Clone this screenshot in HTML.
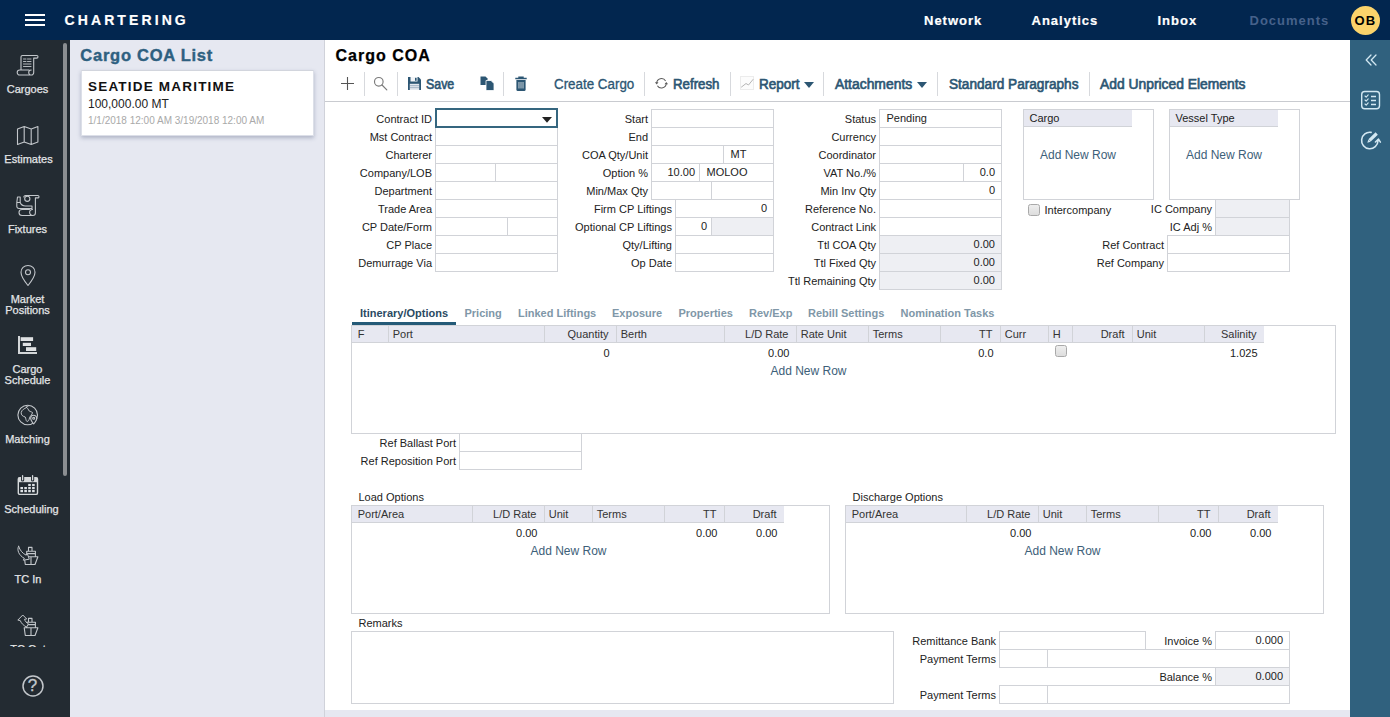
<!DOCTYPE html>
<html lang="en"><head><meta charset="utf-8"><title>Cargo COA - Chartering</title>
<style>
html,body{margin:0;padding:0}
body{width:1390px;height:717px;overflow:hidden;position:relative;background:#fff;font-family:"Liberation Sans",sans-serif;font-size:11px;color:#222}
div,svg{position:absolute;box-sizing:border-box}
.t{white-space:nowrap}
.in{border:1px solid #d1d3d8;background:#fff}
.ro{background:#eeeff3}
.hd{background:#e7e8f1;border-bottom:1px solid #d1d3d8}
.sep{width:1px;background:#d1d3d8}
.cb{width:12px;height:12px;border:1px solid #a9a9a9;border-radius:2.500px;background:linear-gradient(#eeeeee,#dddddd)}
</style></head><body>

<div style="left:0px;top:0px;width:1390px;height:40px;background:#02264f"></div>
<div style="left:0px;top:40px;width:70px;height:677px;background:#232b32"></div>
<div style="left:70px;top:40px;width:255px;height:677px;background:#e6e8f1"></div>
<div style="left:324px;top:40px;width:1px;height:677px;background:#d0d2da"></div>
<div style="left:325px;top:40px;width:1025px;height:670px;background:#fff"></div>
<div style="left:325px;top:710px;width:1025px;height:7px;background:#e6e8f1"></div>
<div style="left:1350px;top:40px;width:40px;height:677px;background:#30617e"></div>
<div style="left:25px;top:14px;width:20px;height:2px;background:#fff"></div>
<div style="left:25px;top:19px;width:20px;height:2px;background:#fff"></div>
<div style="left:25px;top:24px;width:20px;height:2px;background:#fff"></div>
<div class="t" style="top:11.0px;font-size:14px;line-height:18px;color:#fff;font-weight:bold;letter-spacing:3.1px;left:64.5px;-webkit-text-stroke:.2px #fff;">CHARTERING</div>
<div class="t" style="top:12.0px;font-size:13px;line-height:17px;color:#fff;font-weight:bold;letter-spacing:1px;left:924px;-webkit-text-stroke:.2px #fff;">Network</div>
<div class="t" style="top:12.0px;font-size:13px;line-height:17px;color:#fff;font-weight:bold;letter-spacing:1px;left:1031.5px;-webkit-text-stroke:.2px #fff;">Analytics</div>
<div class="t" style="top:12.0px;font-size:13px;line-height:17px;color:#fff;font-weight:bold;letter-spacing:1px;left:1157.5px;-webkit-text-stroke:.2px #fff;">Inbox</div>
<div class="t" style="top:12.0px;font-size:13px;line-height:17px;color:#46618a;font-weight:bold;letter-spacing:1px;left:1249.5px;">Documents</div>
<div style="left:1350.5px;top:6px;width:29px;height:29px;background:#fbd36b;border-radius:50%"></div>
<div class="t" style="top:12.0px;font-size:13px;line-height:17px;color:#000;font-weight:bold;letter-spacing:1.2px;left:1354.5px;">OB</div>
<div style="left:63px;top:43px;width:4px;height:433px;background:#8b8e91;border-radius:2px"></div>
<div style="left:0;top:40px;width:62px;height:607px;overflow:hidden">
<svg style="left:16px;top:14px" width="24" height="23" viewBox="0 0 24 23" fill="none" stroke="#c3c7cb" stroke-width="1.1" stroke-linecap="round" stroke-linejoin="round" ><path d="M6.500 1.500H20.700a1.300 1.300 0 0 1 0 2.600H17.700V18.500a2.500 2.500 0 0 1-2.500 2.500H3.700a2.500 2.500 0 0 1 0-5H13M5 16V3a1.500 1.500 0 0 1 1.500-1.500M15.200 21a2.500 2.500 0 0 1 0-5"/><path d="M7.500 5h2.500M11.500 5h3.500M7.500 7.500h2.500M11.500 7.500h3.500M7.500 10h7.500M7.500 12.500h7.500" stroke-width=".9"/></svg>
<div class="t" style="top:41.5px;font-size:11px;line-height:15px;color:#e3e5e7;left:-122.5px;width:300px;text-align:center;-webkit-text-stroke:.25px #e3e5e7;">Cargoes</div>
<svg style="left:16px;top:85px" width="24" height="22" viewBox="0 0 24 22" fill="none" stroke="#c3c7cb" stroke-width="1.1" stroke-linecap="round" stroke-linejoin="round" ><path d="M1.500 4l6.700-2.500v15.500l-6.700 2.500zM8.200 1.500l7 2.500v15.500l-7-2.500M15.200 4l6.700-2.500v15.500l-6.700 2.500"/></svg>
<div class="t" style="top:111.5px;font-size:11px;line-height:15px;color:#e3e5e7;left:-121.5px;width:300px;text-align:center;-webkit-text-stroke:.25px #e3e5e7;">Estimates</div>
<svg style="left:16px;top:153px" width="24" height="24" viewBox="0 0 24 24" fill="none" stroke="#c3c7cb" stroke-width="1.1" stroke-linecap="round" stroke-linejoin="round" ><path d="M9.500 2.500H21.800a1.200 1.200 0 0 1 0 2.400H19.400V20a2.500 2.500 0 0 1-2.500 2.500H6a3 3 0 0 1 0-6h7.500M16.800 22.500a3 3 0 0 1-.3-6M9.500 2.500a2 2 0 0 0-1.700 1.500"/><circle cx="11.300" cy="5.800" r="2.600"/><path d="M.8 9.500h3.400v-5.500H1.500zM4.200 9.500c1 2.500 3 3.500 5.300 3.500h6.500v2.500H3a2.200 2.200 0 0 1-2.200-2.200V9.500"/></svg>
<div class="t" style="top:181.5px;font-size:11px;line-height:15px;color:#e3e5e7;left:-122.5px;width:300px;text-align:center;-webkit-text-stroke:.25px #e3e5e7;">Fixtures</div>
<svg style="left:18px;top:224px" width="20" height="24" viewBox="0 0 20 24" fill="none" stroke="#c3c7cb" stroke-width="1.1" stroke-linecap="round" stroke-linejoin="round" ><path d="M10 1.500c-4 0-7 3-7 6.800 0 4.700 7 13.200 7 13.200s7-8.500 7-13.200c0-3.800-3-6.800-7-6.800z"/><circle cx="10" cy="8.300" r="2.500"/></svg>
<div class="t" style="top:251.5px;font-size:11px;line-height:15px;color:#e3e5e7;left:-122.5px;width:300px;text-align:center;-webkit-text-stroke:.25px #e3e5e7;">Market</div>
<div class="t" style="top:262.5px;font-size:11px;line-height:15px;color:#e3e5e7;left:-122.5px;width:300px;text-align:center;-webkit-text-stroke:.25px #e3e5e7;">Positions</div>
<svg style="left:17px;top:296px" width="22" height="20" viewBox="0 0 22 20"><path d="M2 0V17H20" fill="none" stroke="#d3d6d8" stroke-width="2"/><rect x="3.600" y="1.200" width="12.500" height="3.800" fill="#dfe1e3"/><rect x="5.800" y="6.800" width="8.200" height="3.200" fill="#dfe1e3"/><rect x="9" y="11.200" width="10.200" height="3.800" fill="#dfe1e3"/></svg>
<div class="t" style="top:321.5px;font-size:11px;line-height:15px;color:#e3e5e7;left:-122.5px;width:300px;text-align:center;-webkit-text-stroke:.25px #e3e5e7;">Cargo</div>
<div class="t" style="top:332.5px;font-size:11px;line-height:15px;color:#e3e5e7;left:-122.5px;width:300px;text-align:center;-webkit-text-stroke:.25px #e3e5e7;">Schedule</div>
<svg style="left:16px;top:363px" width="24" height="24" viewBox="0 0 24 24" fill="none" stroke="#c3c7cb" stroke-width="1.1" stroke-linecap="round" stroke-linejoin="round" ><circle cx="11.700" cy="12" r="9.800"/><path d="M10.500 4.500C8 6 6 6.500 5.200 9.500 5 12 6.500 13.200 9.200 14c.8 1.500.6 3.500 1.600 4.300 1.700.5 2.200-1.300 2.700-3.300s3-3.500 3-5.500c-1.500-1-3.500-1-4-2.500s-1-2-2-2.500zM10 2.800c.5 1 2 1 2.500 .2" stroke-width="1"/><path d="M17.700 12.300c-1.700 0-3 1.300-3 2.900 0 2 3 5.800 3 5.800s3-3.800 3-5.800c0-1.600-1.300-2.900-3-2.900z" fill="#232b32"/><circle cx="17.700" cy="15.200" r="1"/></svg>
<div class="t" style="top:391.5px;font-size:11px;line-height:15px;color:#e3e5e7;left:-122.5px;width:300px;text-align:center;-webkit-text-stroke:.25px #e3e5e7;">Matching</div>
<svg style="left:16px;top:433px" width="24" height="24" viewBox="0 0 24 24"><rect x="2.300" y="4.600" width="19.200" height="16.800" rx="1.500" fill="none" stroke="#d6d9db" stroke-width="1.400"/><rect x="2.300" y="4.600" width="19.200" height="4.600" fill="#d6d9db"/><path d="M6.600 2.400v4.600M16.600 2.400v4.600" stroke="#232b32" stroke-width="3.200" stroke-linecap="round"/><path d="M6.600 2.600v4.200M16.600 2.600v4.200" stroke="#d6d9db" stroke-width="1.300" stroke-linecap="round"/><g fill="#dfe3e6"><rect x="12.2" y="10.9" width="2.600" height="2.200"/><rect x="16.1" y="10.9" width="2.600" height="2.200"/><rect x="4.4" y="14.0" width="2.600" height="2.200"/><rect x="8.3" y="14.0" width="2.600" height="2.200"/><rect x="12.2" y="14.0" width="2.600" height="2.200"/><rect x="16.1" y="14.0" width="2.600" height="2.200"/><rect x="4.4" y="17.0" width="2.600" height="2.200"/><rect x="8.3" y="17.0" width="2.600" height="2.200"/><rect x="12.2" y="17.0" width="2.600" height="2.200"/><rect x="16.1" y="17.0" width="2.600" height="2.200"/></g></svg>
<div class="t" style="top:461.5px;font-size:11px;line-height:15px;color:#e3e5e7;left:-118.5px;width:300px;text-align:center;-webkit-text-stroke:.25px #e3e5e7;">Scheduling</div>
<svg style="left:15px;top:503px" width="26" height="24" viewBox="0 0 26 24" fill="none" stroke="#c3c7cb" stroke-width="1.1" stroke-linecap="round" stroke-linejoin="round" ><path d="M9.200 13.700H22.900L20 21.500H10.300zM16 13.700v7.800M11.700 13.700V8.200h8.700v5.500M11.700 10.600h8.700M13.500 8.200V4.400h3.500v3.800"/><path d="M3.600 3.300C1.500 7 4 12.500 9.300 15.300L8.300 17.200 14.300 16.200 12.200 10.300 11.200 12.200C7.500 10.300 5 7.500 3.600 3.300z" fill="#232b32" stroke-width="1"/></svg>
<div class="t" style="top:531.5px;font-size:11px;line-height:15px;color:#e3e5e7;left:-122px;width:300px;text-align:center;-webkit-text-stroke:.25px #e3e5e7;">TC In</div>
<svg style="left:15px;top:574px" width="26" height="24" viewBox="0 0 26 24" fill="none" stroke="#c3c7cb" stroke-width="1.1" stroke-linecap="round" stroke-linejoin="round" ><path d="M9.200 13.700H22.900L20 21.500H10.300zM16 13.700v7.800M11.700 13.700V8.200h8.700v5.500M11.700 10.600h8.700M13.500 8.200V4.400h3.500v3.800"/><path d="M7.500 1.300L2.800 6.100 5.200 6.500C6.500 9.500 8.500 11.500 11.500 13L13.500 9.800C11.500 8.800 10.200 7.300 9.500 5.300L11.300 5z" fill="#232b32" stroke-width="1"/></svg>
<div class="t" style="top:601.5px;font-size:11px;line-height:15px;color:#e3e5e7;left:-122px;width:300px;text-align:center;-webkit-text-stroke:.25px #e3e5e7;">TC Out</div>
</div>
<svg style="left:20.5px;top:673.5px" width="24" height="24" viewBox="0 0 24 24" fill="none" stroke="#c3c7cb" stroke-width="1.5" stroke-linecap="round" stroke-linejoin="round" ><circle cx="12" cy="12" r="10"/></svg>
<div class="t" style="top:675.0px;font-size:17px;line-height:21px;color:#c3c7cb;left:-117.5px;width:300px;text-align:center;-webkit-text-stroke:.3px #c3c7cb;">?</div>
<div class="t" style="top:45.0px;font-size:16.5px;line-height:20.5px;color:#2e6080;font-weight:bold;letter-spacing:0.75px;left:80.3px;-webkit-text-stroke:.4px #2e6080;">Cargo COA List</div>
<div style="left:80.5px;top:70px;width:233px;height:66px;background:#fff;border:1px solid #dcdfe8;border-top-color:#d2d5dd;box-shadow:0 1.5px 4px rgba(60,70,110,.32)"></div>
<div class="t" style="top:77.5px;font-size:13.5px;line-height:17.5px;color:#111;font-weight:bold;letter-spacing:1.2px;left:88px;">SEATIDE MARITIME</div>
<div class="t" style="top:96.0px;font-size:12px;line-height:16px;color:#222;left:88px;">100,000.00 MT</div>
<div class="t" style="top:113.5px;font-size:10px;line-height:14px;color:#a9a9a9;left:88px;">1/1/2018 12:00 AM 3/19/2018 12:00 AM</div>
<div class="t" style="top:45.5px;font-size:16px;line-height:20px;color:#000;font-weight:bold;letter-spacing:1px;left:335.5px;-webkit-text-stroke:.25px #000;">Cargo COA</div>
<div style="left:325px;top:101px;width:1025px;height:1px;background:#c9cbd0"></div>
<div style="left:364px;top:72px;width:1px;height:24px;background:#d7d9dd"></div>
<div style="left:397px;top:72px;width:1px;height:24px;background:#d7d9dd"></div>
<div style="left:503px;top:72px;width:1px;height:24px;background:#d7d9dd"></div>
<div style="left:644px;top:72px;width:1px;height:24px;background:#d7d9dd"></div>
<div style="left:730px;top:72px;width:1px;height:24px;background:#d7d9dd"></div>
<div style="left:823px;top:72px;width:1px;height:24px;background:#d7d9dd"></div>
<div style="left:937px;top:72px;width:1px;height:24px;background:#d7d9dd"></div>
<div style="left:1089px;top:72px;width:1px;height:24px;background:#d7d9dd"></div>
<div class="t" style="top:75.0px;font-size:14px;line-height:18px;color:#2c5673;left:426.3px;-webkit-text-stroke:0.65px #2c5673;transform:scaleX(0.8835);transform-origin:0 0;">Save</div>
<div class="t" style="top:75.0px;font-size:14px;line-height:18px;color:#2c5673;left:553.7px;-webkit-text-stroke:0.3px #2c5673;transform:scaleX(0.9554);transform-origin:0 0;">Create Cargo</div>
<div class="t" style="top:75.0px;font-size:14px;line-height:18px;color:#2c5673;left:672.8px;-webkit-text-stroke:0.65px #2c5673;transform:scaleX(0.9484);transform-origin:0 0;">Refresh</div>
<div class="t" style="top:75.0px;font-size:14px;line-height:18px;color:#2c5673;left:759.3px;-webkit-text-stroke:0.65px #2c5673;transform:scaleX(0.9636);transform-origin:0 0;">Report</div>
<div class="t" style="top:75.0px;font-size:14px;line-height:18px;color:#2c5673;left:834.6px;-webkit-text-stroke:0.65px #2c5673;transform:scaleX(0.9919);transform-origin:0 0;">Attachments</div>
<div class="t" style="top:75.0px;font-size:14px;line-height:18px;color:#2c5673;left:948.8px;-webkit-text-stroke:0.65px #2c5673;transform:scaleX(0.9730);transform-origin:0 0;">Standard Paragraphs</div>
<div class="t" style="top:75.0px;font-size:14px;line-height:18px;color:#2c5673;left:1100.1px;-webkit-text-stroke:0.65px #2c5673;transform:scaleX(0.9893);transform-origin:0 0;">Add Unpriced Elements</div>
<svg style="left:341px;top:77px" width="13" height="13" viewBox="0 0 13 13" fill="none" stroke="#555" stroke-width="1.1" stroke-linecap="round" stroke-linejoin="round" stroke-linecap="butt"><path d="M6.500 0v13M0 6.500h13"/></svg>
<svg style="left:373px;top:76px" width="15" height="15" viewBox="0 0 15 15" fill="none" stroke="#7a7a7a" stroke-width="1.15" stroke-linecap="round" stroke-linejoin="round" ><circle cx="5.800" cy="5.800" r="4.300"/><path d="M9 9l4.800 4.800"/></svg>
<svg style="left:408px;top:77px" width="13" height="13" viewBox="0 0 13 13"><path d="M0 0h10.500L13 2.500V13H0z" fill="#2c5673"/><rect x="2.500" y="0" width="7" height="4.500" fill="#f3f5f8"/><rect x="7" y=".8" width="1.600" height="3" fill="#2c5673"/><rect x="1.800" y="6.800" width="9.400" height="6.200" fill="#e4e9ef"/><path d="M2 8.700h9M2 10.700h9" stroke="#8ba0b5" stroke-width=".8"/></svg>
<svg style="left:480px;top:76px" width="15" height="15" viewBox="0 0 15 15"><path d="M.5.5h5l2 2V9h-7z" fill="#2c5673"/><path d="M6 4.500h5l3 3V14.500H6z" fill="#2c5673" stroke="#fff" stroke-width=".8"/></svg>
<svg style="left:514.500px;top:76px" width="12" height="15" viewBox="0 0 13 15" preserveAspectRatio="none"><path d="M1.500 4h10v9.500a1.500 1.500 0 0 1-1.500 1.500H3a1.500 1.500 0 0 1-1.500-1.500z" fill="#2c5673"/><path d="M.3 2.600h12.400M4.300 2.200V1.200h4.400V2.200" stroke="#2c5673" stroke-width="1.500" fill="none"/><path d="M4.300 6v6.500M6.500 6v6.500M8.700 6v6.500" stroke="#fff" stroke-width=".8"/></svg>
<svg style="left:654px;top:77px" width="15" height="13" viewBox="0 0 15 13" fill="none" stroke="#5c5c5c" stroke-width="1.050"><path d="M2.700 6.300A4.800 4.800 0 0 1 11.600 3.900M12.300 6.300A4.800 4.800 0 0 1 3.400 8.700"/><path d="M.9 5.300L2.700 7.500 4.500 5.300zM10.500 7.300L12.300 5.100 14.100 7.300z" fill="#5c5c5c" stroke="none"/></svg>
<div style="left:740px;top:76px;width:14px;height:14px;border:1px solid #ececec;background:#fcfcfc"></div>
<svg style="left:740px;top:76px" width="14" height="14" viewBox="0 0 14 14" fill="none" stroke="#b5b5b5" stroke-width="1" stroke-linecap="round" stroke-linejoin="round" ><path d="M1.500 11l4.500-3.500 2.500 1.500 4.500-5.500"/></svg>
<svg style="left:804px;top:82px" width="10" height="6" viewBox="0 0 10 6"><path d="M0 0h10L5 6z" fill="#2c5673"/></svg>
<svg style="left:917px;top:82px" width="10" height="6" viewBox="0 0 10 6"><path d="M0 0h10L5 6z" fill="#2c5673"/></svg>
<div class="t" style="top:111.5px;font-size:11px;line-height:15px;color:#222;right:958px;">Contract ID</div>
<div class="t" style="top:129.5px;font-size:11px;line-height:15px;color:#222;right:958px;">Mst Contract</div>
<div class="t" style="top:147.5px;font-size:11px;line-height:15px;color:#222;right:958px;">Charterer</div>
<div class="t" style="top:165.5px;font-size:11px;line-height:15px;color:#222;right:958px;">Company/LOB</div>
<div class="t" style="top:183.5px;font-size:11px;line-height:15px;color:#222;right:958px;">Department</div>
<div class="t" style="top:201.5px;font-size:11px;line-height:15px;color:#222;right:958px;">Trade Area</div>
<div class="t" style="top:219.5px;font-size:11px;line-height:15px;color:#222;right:958px;">CP Date/Form</div>
<div class="t" style="top:237.5px;font-size:11px;line-height:15px;color:#222;right:958px;">CP Place</div>
<div class="t" style="top:255.5px;font-size:11px;line-height:15px;color:#222;right:958px;">Demurrage Via</div>
<div class="in" style="left:435px;top:109px;width:123px;height:19px;"></div>
<div class="in" style="left:435px;top:127px;width:123px;height:19px;"></div>
<div class="in" style="left:435px;top:145px;width:123px;height:19px;"></div>
<div class="in" style="left:435px;top:163px;width:61px;height:19px;"></div>
<div class="in" style="left:495px;top:163px;width:63px;height:19px;"></div>
<div class="in" style="left:435px;top:181px;width:123px;height:19px;"></div>
<div class="in" style="left:435px;top:199px;width:123px;height:19px;"></div>
<div class="in" style="left:435px;top:217px;width:73px;height:19px;"></div>
<div class="in" style="left:507px;top:217px;width:51px;height:19px;"></div>
<div class="in" style="left:435px;top:235px;width:123px;height:19px;"></div>
<div class="in" style="left:435px;top:253px;width:123px;height:19px;"></div>
<div style="left:435px;top:108px;width:123px;height:20px;border:2px solid #35667f;background:#fff"></div>
<svg style="left:542px;top:117px" width="10" height="6" viewBox="0 0 10 6"><path d="M0 0h10L5 5.700z" fill="#222"/></svg>
<div class="t" style="top:111.5px;font-size:11px;line-height:15px;color:#222;right:742px;">Start</div>
<div class="t" style="top:129.5px;font-size:11px;line-height:15px;color:#222;right:742px;">End</div>
<div class="t" style="top:147.5px;font-size:11px;line-height:15px;color:#222;right:742px;">COA Qty/Unit</div>
<div class="t" style="top:165.5px;font-size:11px;line-height:15px;color:#222;right:742px;">Option %</div>
<div class="t" style="top:183.5px;font-size:11px;line-height:15px;color:#222;right:742px;">Min/Max Qty</div>
<div class="t" style="top:201.5px;font-size:11px;line-height:15px;color:#222;right:718px;">Firm CP Liftings</div>
<div class="t" style="top:219.5px;font-size:11px;line-height:15px;color:#222;right:718px;">Optional CP Liftings</div>
<div class="t" style="top:237.5px;font-size:11px;line-height:15px;color:#222;right:718px;">Qty/Lifting</div>
<div class="t" style="top:255.5px;font-size:11px;line-height:15px;color:#222;right:718px;">Op Date</div>
<div class="in" style="left:651px;top:109px;width:123px;height:19px;"></div>
<div class="in" style="left:651px;top:127px;width:123px;height:19px;"></div>
<div class="in" style="left:651px;top:145px;width:73px;height:19px;"></div>
<div class="in" style="left:723px;top:145px;width:51px;height:19px;"></div>
<div class="t" style="top:146.5px;font-size:11px;line-height:15px;color:#222;left:730.5px;">MT</div>
<div class="in" style="left:651px;top:163px;width:49px;height:19px;"></div>
<div class="t" style="top:164.5px;font-size:11px;line-height:15px;color:#222;right:695px;">10.00</div>
<div class="in" style="left:699px;top:163px;width:75px;height:19px;"></div>
<div class="t" style="top:164.5px;font-size:11px;line-height:15px;color:#222;left:706.5px;">MOLOO</div>
<div class="in" style="left:651px;top:181px;width:61px;height:19px;"></div>
<div class="in" style="left:711px;top:181px;width:63px;height:19px;"></div>
<div class="in" style="left:675px;top:199px;width:99px;height:19px;"></div>
<div class="t" style="top:200.5px;font-size:11px;line-height:15px;color:#222;right:623px;">0</div>
<div class="in" style="left:675px;top:217px;width:37px;height:19px;"></div>
<div class="t" style="top:218.5px;font-size:11px;line-height:15px;color:#222;right:683px;">0</div>
<div class="in ro" style="left:711px;top:217px;width:63px;height:19px;"></div>
<div class="in" style="left:675px;top:235px;width:99px;height:19px;"></div>
<div class="in" style="left:675px;top:253px;width:99px;height:19px;"></div>
<div class="t" style="top:111.5px;font-size:11px;line-height:15px;color:#222;right:514px;">Status</div>
<div class="t" style="top:129.5px;font-size:11px;line-height:15px;color:#222;right:514px;">Currency</div>
<div class="t" style="top:147.5px;font-size:11px;line-height:15px;color:#222;right:514px;">Coordinator</div>
<div class="t" style="top:165.5px;font-size:11px;line-height:15px;color:#222;right:514px;">VAT No./%</div>
<div class="t" style="top:183.5px;font-size:11px;line-height:15px;color:#222;right:514px;">Min Inv Qty</div>
<div class="t" style="top:201.5px;font-size:11px;line-height:15px;color:#222;right:514px;">Reference No.</div>
<div class="t" style="top:219.5px;font-size:11px;line-height:15px;color:#222;right:514px;">Contract Link</div>
<div class="t" style="top:237.5px;font-size:11px;line-height:15px;color:#222;right:514px;">Ttl COA Qty</div>
<div class="t" style="top:255.5px;font-size:11px;line-height:15px;color:#222;right:514px;">Ttl Fixed Qty</div>
<div class="t" style="top:273.5px;font-size:11px;line-height:15px;color:#222;right:514px;">Ttl Remaining Qty</div>
<div class="in" style="left:879px;top:109px;width:123px;height:19px;"></div>
<div class="t" style="top:110.5px;font-size:11px;line-height:15px;color:#222;left:886.5px;">Pending</div>
<div class="in" style="left:879px;top:127px;width:123px;height:19px;"></div>
<div class="in" style="left:879px;top:145px;width:123px;height:19px;"></div>
<div class="in" style="left:879px;top:163px;width:85px;height:19px;"></div>
<div class="in" style="left:963px;top:163px;width:39px;height:19px;"></div>
<div class="t" style="top:164.5px;font-size:11px;line-height:15px;color:#222;right:395px;">0.0</div>
<div class="in" style="left:879px;top:181px;width:123px;height:19px;"></div>
<div class="t" style="top:182.5px;font-size:11px;line-height:15px;color:#222;right:395px;">0</div>
<div class="in" style="left:879px;top:199px;width:123px;height:19px;"></div>
<div class="in" style="left:879px;top:217px;width:123px;height:19px;"></div>
<div class="in ro" style="left:879px;top:235px;width:123px;height:19px;"></div>
<div class="t" style="top:236.5px;font-size:11px;line-height:15px;color:#222;right:395px;">0.00</div>
<div class="in ro" style="left:879px;top:253px;width:123px;height:19px;"></div>
<div class="t" style="top:254.5px;font-size:11px;line-height:15px;color:#222;right:395px;">0.00</div>
<div class="in ro" style="left:879px;top:271px;width:123px;height:19px;"></div>
<div class="t" style="top:272.5px;font-size:11px;line-height:15px;color:#222;right:395px;">0.00</div>
<div style="left:1023px;top:109px;width:131px;height:91px;border:1px solid #d1d3d8;background:#fff"></div>
<div class="hd" style="left:1024px;top:110px;width:108px;height:17px;"></div>
<div class="t" style="top:110.5px;font-size:11px;line-height:15px;color:#222;left:1029.5px;">Cargo</div>
<div class="t" style="top:147.0px;font-size:12px;line-height:16px;color:#3d6079;left:1040px;">Add New Row</div>
<div style="left:1169px;top:109px;width:131px;height:91px;border:1px solid #d1d3d8;background:#fff"></div>
<div class="hd" style="left:1170px;top:110px;width:108px;height:17px;"></div>
<div class="t" style="top:110.5px;font-size:11px;line-height:15px;color:#222;left:1175.5px;">Vessel Type</div>
<div class="t" style="top:147.0px;font-size:12px;line-height:16px;color:#3d6079;left:1186px;">Add New Row</div>
<div class="cb" style="left:1028px;top:204px;width:12px;height:12px;"></div>
<div class="t" style="top:202.5px;font-size:11px;line-height:15px;color:#222;left:1044.5px;">Intercompany</div>
<div class="t" style="top:201.5px;font-size:11px;line-height:15px;color:#222;right:178px;">IC Company</div>
<div class="t" style="top:219.5px;font-size:11px;line-height:15px;color:#222;right:178px;">IC Adj %</div>
<div class="in ro" style="left:1215px;top:199px;width:75px;height:19px;"></div>
<div class="in ro" style="left:1215px;top:217px;width:75px;height:19px;"></div>
<div class="t" style="top:237.5px;font-size:11px;line-height:15px;color:#222;right:226px;">Ref Contract</div>
<div class="t" style="top:255.5px;font-size:11px;line-height:15px;color:#222;right:226px;">Ref Company</div>
<div class="in" style="left:1167px;top:235px;width:123px;height:19px;"></div>
<div class="in" style="left:1167px;top:253px;width:123px;height:19px;"></div>
<div class="t" style="top:305.5px;font-size:11px;line-height:15px;color:#2a4a62;font-weight:bold;left:360px;">Itinerary/Options</div>
<div style="left:352px;top:322px;width:104px;height:3px;background:#245a78"></div>
<div class="t" style="top:305.5px;font-size:11px;line-height:15px;color:#8097a8;font-weight:bold;left:464.5px;">Pricing</div>
<div class="t" style="top:305.5px;font-size:11px;line-height:15px;color:#8097a8;font-weight:bold;left:518px;">Linked Liftings</div>
<div class="t" style="top:305.5px;font-size:11px;line-height:15px;color:#8097a8;font-weight:bold;left:612px;">Exposure</div>
<div class="t" style="top:305.5px;font-size:11px;line-height:15px;color:#8097a8;font-weight:bold;left:678.5px;">Properties</div>
<div class="t" style="top:305.5px;font-size:11px;line-height:15px;color:#8097a8;font-weight:bold;left:749px;">Rev/Exp</div>
<div class="t" style="top:305.5px;font-size:11px;line-height:15px;color:#8097a8;font-weight:bold;left:808px;">Rebill Settings</div>
<div class="t" style="top:305.5px;font-size:11px;line-height:15px;color:#8097a8;font-weight:bold;left:900.5px;">Nomination Tasks</div>
<div style="left:351px;top:325px;width:985px;height:109px;border:1px solid #d1d3d8;background:#fff"></div>
<div class="hd" style="left:352px;top:326px;width:912px;height:17px;"></div>
<div style="left:388px;top:326px;width:1px;height:16px;background:#d1d3d8"></div>
<div class="t" style="top:326.5px;font-size:11px;line-height:15px;color:#333;left:357.7px;">F</div>
<div style="left:544px;top:326px;width:1px;height:16px;background:#d1d3d8"></div>
<div class="t" style="top:326.5px;font-size:11px;line-height:15px;color:#333;left:392.7px;">Port</div>
<div style="left:616px;top:326px;width:1px;height:16px;background:#d1d3d8"></div>
<div class="t" style="top:326.5px;font-size:11px;line-height:15px;color:#333;right:781.5px;">Quantity</div>
<div style="left:724px;top:326px;width:1px;height:16px;background:#d1d3d8"></div>
<div class="t" style="top:326.5px;font-size:11px;line-height:15px;color:#333;left:620.7px;">Berth</div>
<div style="left:796px;top:326px;width:1px;height:16px;background:#d1d3d8"></div>
<div class="t" style="top:326.5px;font-size:11px;line-height:15px;color:#333;right:601.5px;">L/D Rate</div>
<div style="left:868px;top:326px;width:1px;height:16px;background:#d1d3d8"></div>
<div class="t" style="top:326.5px;font-size:11px;line-height:15px;color:#333;left:800.7px;">Rate Unit</div>
<div style="left:940px;top:326px;width:1px;height:16px;background:#d1d3d8"></div>
<div class="t" style="top:326.5px;font-size:11px;line-height:15px;color:#333;left:872.7px;">Terms</div>
<div style="left:1000px;top:326px;width:1px;height:16px;background:#d1d3d8"></div>
<div class="t" style="top:326.5px;font-size:11px;line-height:15px;color:#333;right:397.5px;">TT</div>
<div style="left:1048px;top:326px;width:1px;height:16px;background:#d1d3d8"></div>
<div class="t" style="top:326.5px;font-size:11px;line-height:15px;color:#333;left:1004.7px;">Curr</div>
<div style="left:1072px;top:326px;width:1px;height:16px;background:#d1d3d8"></div>
<div class="t" style="top:326.5px;font-size:11px;line-height:15px;color:#333;left:1052.7px;">H</div>
<div style="left:1132px;top:326px;width:1px;height:16px;background:#d1d3d8"></div>
<div class="t" style="top:326.5px;font-size:11px;line-height:15px;color:#333;right:265.5px;">Draft</div>
<div style="left:1204px;top:326px;width:1px;height:16px;background:#d1d3d8"></div>
<div class="t" style="top:326.5px;font-size:11px;line-height:15px;color:#333;left:1136.7px;">Unit</div>
<div class="t" style="top:326.5px;font-size:11px;line-height:15px;color:#333;right:133.5px;">Salinity</div>
<div class="t" style="top:345.5px;font-size:11px;line-height:15px;color:#222;right:780.5px;">0</div>
<div class="t" style="top:345.5px;font-size:11px;line-height:15px;color:#222;right:600.5px;">0.00</div>
<div class="t" style="top:345.5px;font-size:11px;line-height:15px;color:#222;right:396.5px;">0.0</div>
<div class="t" style="top:345.5px;font-size:11px;line-height:15px;color:#222;right:132.5px;">1.025</div>
<div class="t" style="top:362.5px;font-size:12px;line-height:16px;color:#3d6079;left:770.5px;">Add New Row</div>
<div class="cb" style="left:1055px;top:345px;width:12px;height:12px;"></div>
<div class="t" style="top:435.5px;font-size:11px;line-height:15px;color:#222;right:934px;">Ref Ballast Port</div>
<div class="t" style="top:453.5px;font-size:11px;line-height:15px;color:#222;right:934px;">Ref Reposition Port</div>
<div class="in" style="left:459px;top:433px;width:123px;height:19px;"></div>
<div class="in" style="left:459px;top:451px;width:123px;height:19px;"></div>
<div class="t" style="top:490.0px;font-size:11px;line-height:15px;color:#222;left:358.5px;">Load Options</div>
<div style="left:351px;top:505px;width:479px;height:109px;border:1px solid #d1d3d8;background:#fff"></div>
<div class="hd" style="left:352px;top:506px;width:432px;height:17px;"></div>
<div style="left:472px;top:506px;width:1px;height:16px;background:#d1d3d8"></div>
<div class="t" style="top:506.5px;font-size:11px;line-height:15px;color:#333;left:357.7px;">Port/Area</div>
<div style="left:544px;top:506px;width:1px;height:16px;background:#d1d3d8"></div>
<div class="t" style="top:506.5px;font-size:11px;line-height:15px;color:#333;right:853.5px;">L/D Rate</div>
<div style="left:592px;top:506px;width:1px;height:16px;background:#d1d3d8"></div>
<div class="t" style="top:506.5px;font-size:11px;line-height:15px;color:#333;left:548.7px;">Unit</div>
<div style="left:664px;top:506px;width:1px;height:16px;background:#d1d3d8"></div>
<div class="t" style="top:506.5px;font-size:11px;line-height:15px;color:#333;left:596.7px;">Terms</div>
<div style="left:724px;top:506px;width:1px;height:16px;background:#d1d3d8"></div>
<div class="t" style="top:506.5px;font-size:11px;line-height:15px;color:#333;right:673.5px;">TT</div>
<div class="t" style="top:506.5px;font-size:11px;line-height:15px;color:#333;right:613.5px;">Draft</div>
<div class="t" style="top:525.5px;font-size:11px;line-height:15px;color:#222;right:852.5px;">0.00</div>
<div class="t" style="top:525.5px;font-size:11px;line-height:15px;color:#222;right:672.5px;">0.00</div>
<div class="t" style="top:525.5px;font-size:11px;line-height:15px;color:#222;right:612.5px;">0.00</div>
<div class="t" style="top:542.5px;font-size:12px;line-height:16px;color:#3d6079;left:530.5px;">Add New Row</div>
<div class="t" style="top:490.0px;font-size:11px;line-height:15px;color:#222;left:852.5px;">Discharge Options</div>
<div style="left:845px;top:505px;width:479px;height:109px;border:1px solid #d1d3d8;background:#fff"></div>
<div class="hd" style="left:846px;top:506px;width:432px;height:17px;"></div>
<div style="left:966px;top:506px;width:1px;height:16px;background:#d1d3d8"></div>
<div class="t" style="top:506.5px;font-size:11px;line-height:15px;color:#333;left:851.7px;">Port/Area</div>
<div style="left:1038px;top:506px;width:1px;height:16px;background:#d1d3d8"></div>
<div class="t" style="top:506.5px;font-size:11px;line-height:15px;color:#333;right:359.5px;">L/D Rate</div>
<div style="left:1086px;top:506px;width:1px;height:16px;background:#d1d3d8"></div>
<div class="t" style="top:506.5px;font-size:11px;line-height:15px;color:#333;left:1042.7px;">Unit</div>
<div style="left:1158px;top:506px;width:1px;height:16px;background:#d1d3d8"></div>
<div class="t" style="top:506.5px;font-size:11px;line-height:15px;color:#333;left:1090.7px;">Terms</div>
<div style="left:1218px;top:506px;width:1px;height:16px;background:#d1d3d8"></div>
<div class="t" style="top:506.5px;font-size:11px;line-height:15px;color:#333;right:179.5px;">TT</div>
<div class="t" style="top:506.5px;font-size:11px;line-height:15px;color:#333;right:119.5px;">Draft</div>
<div class="t" style="top:525.5px;font-size:11px;line-height:15px;color:#222;right:358.5px;">0.00</div>
<div class="t" style="top:525.5px;font-size:11px;line-height:15px;color:#222;right:178.5px;">0.00</div>
<div class="t" style="top:525.5px;font-size:11px;line-height:15px;color:#222;right:118.5px;">0.00</div>
<div class="t" style="top:542.5px;font-size:12px;line-height:16px;color:#3d6079;left:1024.5px;">Add New Row</div>
<div class="t" style="top:615.5px;font-size:11px;line-height:15px;color:#222;left:358.5px;">Remarks</div>
<div style="left:351px;top:631px;width:543px;height:73px;border:1px solid #d1d3d8;background:#fff"></div>
<div class="t" style="top:633.5px;font-size:11px;line-height:15px;color:#222;right:394px;">Remittance Bank</div>
<div class="in" style="left:999px;top:631px;width:147px;height:19px;"></div>
<div class="t" style="top:633.5px;font-size:11px;line-height:15px;color:#222;right:178px;">Invoice %</div>
<div class="in" style="left:1215px;top:631px;width:75px;height:19px;"></div>
<div class="t" style="top:632.5px;font-size:11px;line-height:15px;color:#222;right:107px;">0.000</div>
<div class="t" style="top:651.5px;font-size:11px;line-height:15px;color:#222;right:394px;">Payment Terms</div>
<div class="in" style="left:999px;top:649px;width:49px;height:19px;"></div>
<div class="in" style="left:1047px;top:649px;width:243px;height:19px;"></div>
<div class="t" style="top:669.5px;font-size:11px;line-height:15px;color:#222;right:178px;">Balance %</div>
<div class="in ro" style="left:1215px;top:667px;width:75px;height:19px;"></div>
<div class="t" style="top:668.5px;font-size:11px;line-height:15px;color:#222;right:107px;">0.000</div>
<div class="t" style="top:687.5px;font-size:11px;line-height:15px;color:#222;right:394px;">Payment Terms</div>
<div class="in" style="left:999px;top:685px;width:49px;height:19px;"></div>
<div class="in" style="left:1047px;top:685px;width:243px;height:19px;"></div>
<svg style="left:1364.5px;top:53.5px" width="13" height="12" viewBox="0 0 13 12" fill="none" stroke="#d3e8f2" stroke-width="1.25" stroke-linecap="round" stroke-linejoin="round" ><path d="M6 1L1.200 6l4.800 5M11 1L6.200 6l4.800 5"/></svg>
<svg style="left:1360px;top:90px" width="21" height="20" viewBox="0 0 21 20" fill="none" stroke="#d3e8f2" stroke-width="1.4" stroke-linecap="round" stroke-linejoin="round" ><rect x="1.700" y="1.500" width="17.800" height="17.200" rx="3"/><path d="M5 6l1.200 1.200 2-2.400M5 10l1.200 1.200 2-2.400M5 14l1.200 1.200 2-2.400" stroke-width="1.100"/><path d="M11 6.500h5M11 10.500h5M11 14.500h5" stroke-width="1.500" stroke-linecap="butt"/></svg>
<svg style="left:1359px;top:128.5px" width="23" height="22" viewBox="0 0 23 22" fill="none" stroke="#d3e8f2" stroke-width="1.4" stroke-linecap="round" stroke-linejoin="round" ><path d="M12.100 3.400A8.200 8.200 0 1 0 19 11.800" stroke-width="1.600"/><path d="M16.400 13L19.500 10.100 21.400 13.200" stroke-width="1.500"/><path d="M10.600 11.400L17.700 4.500" stroke-width="3.300" stroke-linecap="butt"/><path d="M8.300 13.800l1.100-3.400 2.300 2.300z" fill="#d3e8f2" stroke="none"/></svg>
</body></html>
